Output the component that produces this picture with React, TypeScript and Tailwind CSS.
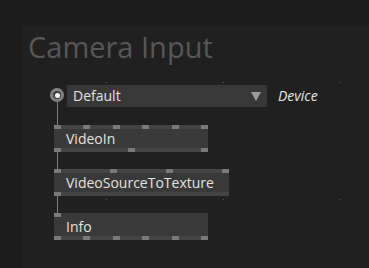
import React from "react";

type NodeProps = {
  label: string;
  width: number;
  topPins: number;
  bottomPins: number;
};

const Pin = () => <div className="w-[7px] h-[4px] bg-[#7a7a7a]" />;

const PinRow = ({ count }: { count: number }) => {
  if (count === 0) return <div className="h-[4px]" />;
  return (
    <div className="flex h-[4px] justify-between bg-[#444444]">
      {Array.from({ length: count }).map((_, i) => (
        <Pin key={i} />
      ))}
    </div>
  );
};

const PatchNode: React.FC<NodeProps> = ({ label, width, topPins, bottomPins }) => (
  <div className="flex flex-col bg-[#393939]" style={{ width }}>
    {topPins === 1 ? (
      <div className="flex h-[4px]">
        <Pin />
      </div>
    ) : (
      <PinRow count={topPins} />
    )}
    <div className="h-[19px] flex items-center pl-[12px] text-[14px] font-medium leading-none text-[#e2e2e2]">
      {label}
    </div>
    {bottomPins === 1 ? (
      <div className="flex h-[4px] bg-[#444444]">
        <Pin />
      </div>
    ) : (
      <PinRow count={bottomPins} />
    )}
  </div>
);

const Cable = ({ h }: { h: number }) => (
  <div className="ml-[3px] w-px bg-[#7d7d7d]" style={{ height: h }} />
);

const dots = [
  [84, 57],
  [201, 57],
  [318, 57],
  [84, 174],
  [201, 174],
  [318, 174],
];

export default function App() {
  return (
    <div
      className="w-[369px] h-[268px] bg-[#1b1b1b] pt-[25px] pl-[22px] flex flex-col overflow-hidden"
      style={{ fontFamily: '"Open Sans", "Noto Sans", sans-serif' }}
    >
      <div className="relative flex-1 bg-[#202020] flex flex-col">
        {dots.map(([x, y], i) => (
          <div
            key={i}
            className="absolute w-px h-px bg-[#5a5a5a]"
            style={{ left: x, top: y }}
          />
        ))}

        <h1 className="pt-[7px] pl-[6px] text-[29px] leading-[29px] text-[#575757]">
          Camera Input
        </h1>

        {/* device selector */}
        <div className="mt-[24px] ml-[28px] flex h-[22px] items-stretch">
          <div className="w-[14px] flex flex-col">
            <div className="h-[3px]" />
            <div className="w-[14px] h-[14px] rounded-full bg-[#818181] flex items-center justify-center">
              <div className="w-[8px] h-[8px] rounded-full bg-[#3c3c3c] flex items-center justify-center">
                <div className="w-[5px] h-[5px] rounded-full bg-white" />
              </div>
            </div>
            <div className="ml-[7px] w-px flex-1 bg-[#7d7d7d]" />
          </div>
          <div className="ml-[3px] w-[200px] bg-[#383838] flex items-center justify-between pl-[6px] pr-[6px]">
            <span className="text-[14px] font-medium leading-none text-[#e2e2e2]">Default</span>
            <svg width="10" height="9" viewBox="0 0 10 9">
              <polygon points="0,0 10,0 5,9" fill="#9a9a9a" />
            </svg>
          </div>
          <div className="ml-[11px] flex items-center text-[14px] font-medium italic leading-none text-[#e6e6e6]">
            Device
          </div>
        </div>

        <div className="ml-[32px] flex flex-col">
          <Cable h={18} />
          <PatchNode label="VideoIn" width={154} topPins={6} bottomPins={3} />
          <Cable h={17} />
          <PatchNode label="VideoSourceToTexture" width={175} topPins={4} bottomPins={1} />
          <Cable h={17} />
          <PatchNode label="Info" width={154} topPins={1} bottomPins={6} />
        </div>
      </div>
    </div>
  );
}
